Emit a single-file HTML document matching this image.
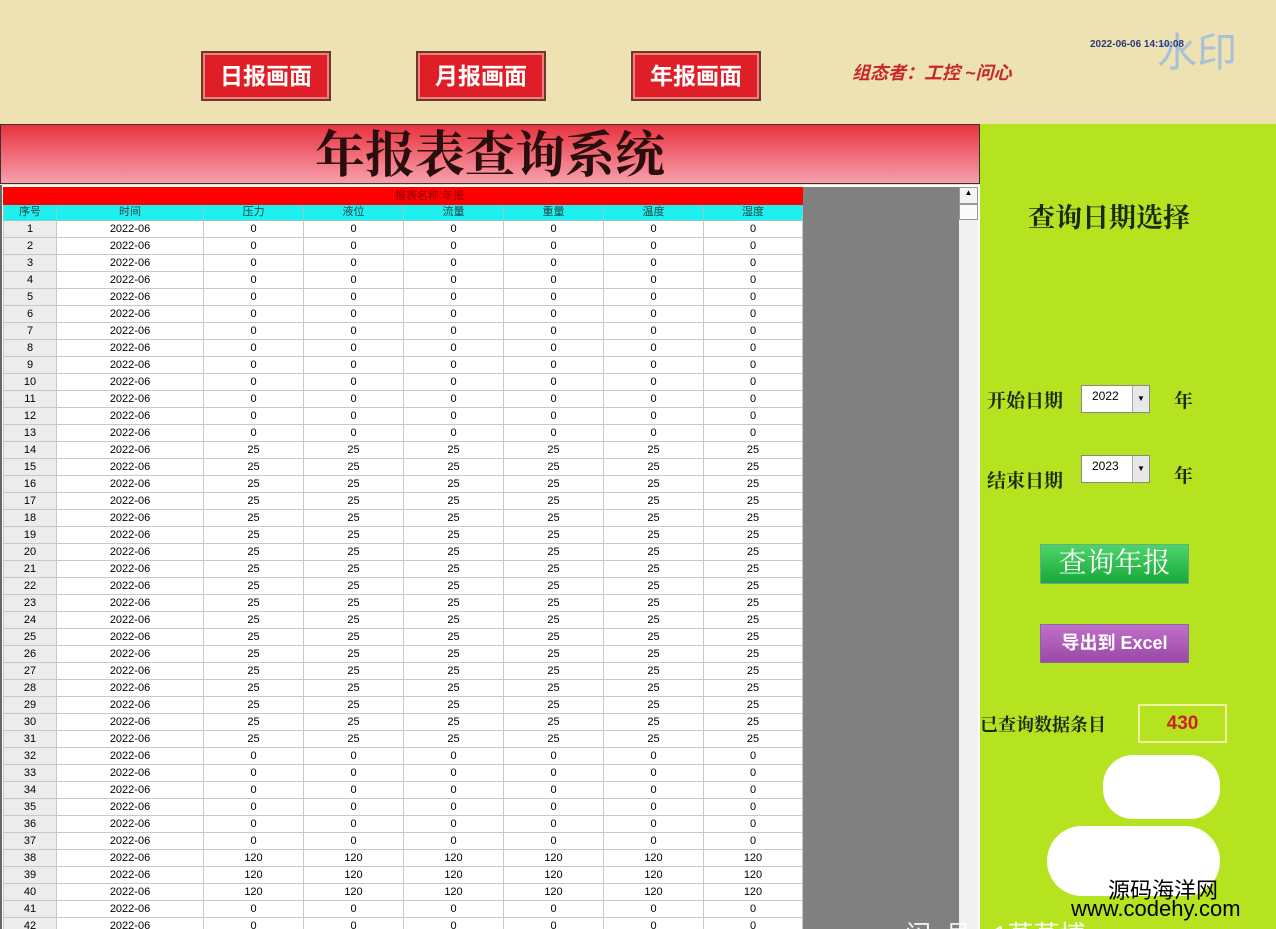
<!DOCTYPE html>
<html><head><meta charset="utf-8"><style>
*{margin:0;padding:0;box-sizing:border-box}
html,body{width:1276px;height:929px;overflow:hidden}
body{background:#eee2b3;position:relative;font-family:"Liberation Sans","Noto Sans CJK SC",sans-serif}
.btn{position:absolute;top:51px;width:130px;height:50px;background:#e01e27;border:2px solid #6b3a28;box-shadow:inset 0 0 0 2px #f08080;color:#fff;font-weight:bold;font-size:23px;text-align:center;line-height:46px}
.title{position:absolute;left:0;top:124px;width:980px;height:60px;background:linear-gradient(#e8333f,#f7a0ad);border:1px solid #333;text-align:center;font-family:"Liberation Serif","Noto Serif CJK SC",serif;font-size:50px;line-height:60px;color:#2a0d0d;font-weight:bold}
.area{position:absolute;left:0;top:185px;width:980px;height:744px;background:#fff;border-left:2px solid #666;overflow:hidden}
.gray{position:absolute;left:803px;top:187px;width:156px;height:742px;background:#808080}
.sb{position:absolute;left:959px;top:187px;width:19px;height:742px;background:#f0f0f0}
.tw{position:absolute;left:3px;top:187px;width:800px;height:742px;overflow:hidden}
table{border-collapse:collapse;font-size:11px;table-layout:fixed}
td{border:1px solid #c8c8c8;height:17px;text-align:center;padding:0;line-height:15px;color:#000}
td:first-child{background:#ececec}
tr.h1 td{background:#f00;color:#800;height:17px;border-color:#f00}
tr.h2 td{background:#1ef0f0;color:#244;height:16px;border-color:#8cc}
.right{position:absolute;left:980px;top:124px;width:296px;height:805px;background:#b6e31f}
.lbl{position:absolute;font-family:"Liberation Serif","Noto Serif CJK SC",serif;color:#1a2a10;font-weight:bold}
.sel{position:absolute;left:1081px;width:69px;height:28px;background:#fff;border:1px solid #888;font-size:12px;padding:3px 0 0 10px}
.sel i{position:absolute;right:0;top:0;width:17px;height:26px;background:#e8e8e8;border-left:1px solid #aaa;font-style:normal;font-size:8px;text-align:center;line-height:26px}
.blob{position:absolute;background:#fff;border-radius:22px}
</style></head><body>
<div class="btn" style="left:201px">日报画面</div>
<div class="btn" style="left:416px">月报画面</div>
<div class="btn" style="left:631px">年报画面</div>
<div style="position:absolute;left:852px;top:59px;color:#c8282a;font-weight:bold;font-style:italic;font-size:18px">组态者：工控 ~问心</div>
<div style="position:absolute;left:1157px;top:20px;color:#a8c0d8;font-size:40px">水印</div>
<div style="position:absolute;left:1090px;top:39px;color:#2a3a7a;font-weight:bold;font-size:10px">2022-06-06 14:10:08</div>
<div class="title">年报表查询系统</div>
<div class="area"></div>
<div class="gray"></div>
<div class="sb"><div style="height:17px;border:1px solid #999;background:#f4f4f4;font-size:8px;text-align:center">▲</div><div style="height:16px;border:1px solid #999;background:#fafafa"></div></div>
<div class="tw"><table>
<colgroup><col style="width:53px"><col style="width:147px"><col style="width:100px"><col style="width:100px"><col style="width:100px"><col style="width:100px"><col style="width:100px"><col style="width:99px"></colgroup>
<tr class="h1"><td style="background:#f00"></td><td colspan="7">报表名称:年报</td></tr>
<tr class="h2"><td style="background:#1ef0f0">序号</td><td>时间</td><td>压力</td><td>液位</td><td>流量</td><td>重量</td><td>温度</td><td>湿度</td></tr>
<tr><td>1</td><td>2022-06</td><td>0</td><td>0</td><td>0</td><td>0</td><td>0</td><td>0</td></tr>
<tr><td>2</td><td>2022-06</td><td>0</td><td>0</td><td>0</td><td>0</td><td>0</td><td>0</td></tr>
<tr><td>3</td><td>2022-06</td><td>0</td><td>0</td><td>0</td><td>0</td><td>0</td><td>0</td></tr>
<tr><td>4</td><td>2022-06</td><td>0</td><td>0</td><td>0</td><td>0</td><td>0</td><td>0</td></tr>
<tr><td>5</td><td>2022-06</td><td>0</td><td>0</td><td>0</td><td>0</td><td>0</td><td>0</td></tr>
<tr><td>6</td><td>2022-06</td><td>0</td><td>0</td><td>0</td><td>0</td><td>0</td><td>0</td></tr>
<tr><td>7</td><td>2022-06</td><td>0</td><td>0</td><td>0</td><td>0</td><td>0</td><td>0</td></tr>
<tr><td>8</td><td>2022-06</td><td>0</td><td>0</td><td>0</td><td>0</td><td>0</td><td>0</td></tr>
<tr><td>9</td><td>2022-06</td><td>0</td><td>0</td><td>0</td><td>0</td><td>0</td><td>0</td></tr>
<tr><td>10</td><td>2022-06</td><td>0</td><td>0</td><td>0</td><td>0</td><td>0</td><td>0</td></tr>
<tr><td>11</td><td>2022-06</td><td>0</td><td>0</td><td>0</td><td>0</td><td>0</td><td>0</td></tr>
<tr><td>12</td><td>2022-06</td><td>0</td><td>0</td><td>0</td><td>0</td><td>0</td><td>0</td></tr>
<tr><td>13</td><td>2022-06</td><td>0</td><td>0</td><td>0</td><td>0</td><td>0</td><td>0</td></tr>
<tr><td>14</td><td>2022-06</td><td>25</td><td>25</td><td>25</td><td>25</td><td>25</td><td>25</td></tr>
<tr><td>15</td><td>2022-06</td><td>25</td><td>25</td><td>25</td><td>25</td><td>25</td><td>25</td></tr>
<tr><td>16</td><td>2022-06</td><td>25</td><td>25</td><td>25</td><td>25</td><td>25</td><td>25</td></tr>
<tr><td>17</td><td>2022-06</td><td>25</td><td>25</td><td>25</td><td>25</td><td>25</td><td>25</td></tr>
<tr><td>18</td><td>2022-06</td><td>25</td><td>25</td><td>25</td><td>25</td><td>25</td><td>25</td></tr>
<tr><td>19</td><td>2022-06</td><td>25</td><td>25</td><td>25</td><td>25</td><td>25</td><td>25</td></tr>
<tr><td>20</td><td>2022-06</td><td>25</td><td>25</td><td>25</td><td>25</td><td>25</td><td>25</td></tr>
<tr><td>21</td><td>2022-06</td><td>25</td><td>25</td><td>25</td><td>25</td><td>25</td><td>25</td></tr>
<tr><td>22</td><td>2022-06</td><td>25</td><td>25</td><td>25</td><td>25</td><td>25</td><td>25</td></tr>
<tr><td>23</td><td>2022-06</td><td>25</td><td>25</td><td>25</td><td>25</td><td>25</td><td>25</td></tr>
<tr><td>24</td><td>2022-06</td><td>25</td><td>25</td><td>25</td><td>25</td><td>25</td><td>25</td></tr>
<tr><td>25</td><td>2022-06</td><td>25</td><td>25</td><td>25</td><td>25</td><td>25</td><td>25</td></tr>
<tr><td>26</td><td>2022-06</td><td>25</td><td>25</td><td>25</td><td>25</td><td>25</td><td>25</td></tr>
<tr><td>27</td><td>2022-06</td><td>25</td><td>25</td><td>25</td><td>25</td><td>25</td><td>25</td></tr>
<tr><td>28</td><td>2022-06</td><td>25</td><td>25</td><td>25</td><td>25</td><td>25</td><td>25</td></tr>
<tr><td>29</td><td>2022-06</td><td>25</td><td>25</td><td>25</td><td>25</td><td>25</td><td>25</td></tr>
<tr><td>30</td><td>2022-06</td><td>25</td><td>25</td><td>25</td><td>25</td><td>25</td><td>25</td></tr>
<tr><td>31</td><td>2022-06</td><td>25</td><td>25</td><td>25</td><td>25</td><td>25</td><td>25</td></tr>
<tr><td>32</td><td>2022-06</td><td>0</td><td>0</td><td>0</td><td>0</td><td>0</td><td>0</td></tr>
<tr><td>33</td><td>2022-06</td><td>0</td><td>0</td><td>0</td><td>0</td><td>0</td><td>0</td></tr>
<tr><td>34</td><td>2022-06</td><td>0</td><td>0</td><td>0</td><td>0</td><td>0</td><td>0</td></tr>
<tr><td>35</td><td>2022-06</td><td>0</td><td>0</td><td>0</td><td>0</td><td>0</td><td>0</td></tr>
<tr><td>36</td><td>2022-06</td><td>0</td><td>0</td><td>0</td><td>0</td><td>0</td><td>0</td></tr>
<tr><td>37</td><td>2022-06</td><td>0</td><td>0</td><td>0</td><td>0</td><td>0</td><td>0</td></tr>
<tr><td>38</td><td>2022-06</td><td>120</td><td>120</td><td>120</td><td>120</td><td>120</td><td>120</td></tr>
<tr><td>39</td><td>2022-06</td><td>120</td><td>120</td><td>120</td><td>120</td><td>120</td><td>120</td></tr>
<tr><td>40</td><td>2022-06</td><td>120</td><td>120</td><td>120</td><td>120</td><td>120</td><td>120</td></tr>
<tr><td>41</td><td>2022-06</td><td>0</td><td>0</td><td>0</td><td>0</td><td>0</td><td>0</td></tr>
<tr><td>42</td><td>2022-06</td><td>0</td><td>0</td><td>0</td><td>0</td><td>0</td><td>0</td></tr>
</table></div>
<div class="right"></div>
<div class="lbl" style="left:1028px;top:196px;font-size:27px">查询日期选择</div>
<div class="lbl" style="left:987px;top:386px;font-size:19px">开始日期</div>
<div class="sel" style="top:385px">2022<i>▼</i></div>
<div class="lbl" style="left:1174px;top:386px;font-size:19px">年</div>
<div class="lbl" style="left:987px;top:466px;font-size:19px">结束日期</div>
<div class="sel" style="top:455px">2023<i>▼</i></div>
<div class="lbl" style="left:1174px;top:461px;font-size:19px">年</div>
<div style="position:absolute;left:1040px;top:544px;width:149px;height:40px;background:linear-gradient(#4ed46a,#18a83a);border:1px solid #6a8;color:#fff;font-family:'Liberation Serif','Noto Serif CJK SC',serif;font-size:28px;text-align:center;line-height:38px">查询年报</div>
<div style="position:absolute;left:1040px;top:624px;width:149px;height:39px;background:linear-gradient(#c070c8,#9a48a8);border:1px solid #86a;color:#fff;font-weight:bold;font-size:18px;text-align:center;line-height:37px">导出到 Excel</div>
<div class="lbl" style="left:980px;top:711px;font-size:18px">已查询数据条目</div>
<div style="position:absolute;left:1138px;top:704px;width:89px;height:39px;border:2px solid #f0f0a0;color:#d02020;font-weight:bold;font-size:19px;text-align:center;line-height:35px">430</div>
<div class="blob" style="left:1103px;top:755px;width:117px;height:64px;border-radius:30px"></div>
<div class="blob" style="left:1047px;top:826px;width:173px;height:70px;border-radius:35px"></div>
<div style="position:absolute;left:1108px;top:873px;font-size:22px;color:#000">源码海洋网</div>
<div style="position:absolute;left:1071px;top:896px;font-size:22px;color:#000">www.codehy.com</div>
<div style="position:absolute;left:905px;top:915px;font-size:26px;color:#fff;opacity:.9">闪&nbsp;&nbsp;号 &nbsp; 1蒸蒸博</div>
</body></html>
